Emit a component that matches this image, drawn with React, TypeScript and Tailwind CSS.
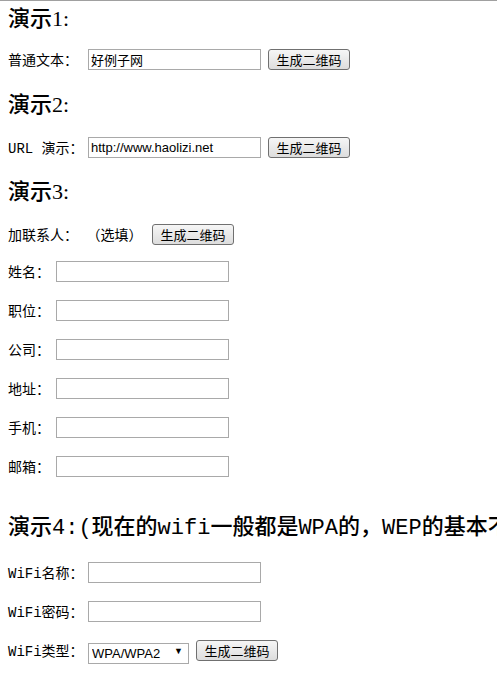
const cjk = "font-['Liberation_Mono','Noto_Sans_CJK_SC',monospace]";

function Btn() {
  return (
    <button className="h-[21px] w-[82px] rounded-[3px] border border-[#707070] bg-gradient-to-b from-[#f6f6f6] to-[#dddddd] text-[13px] leading-[19px] text-black font-['Noto_Sans_CJK_SC',sans-serif]">
      生成二维码
    </button>
  );
}

function Field({ value = "" }: { value?: string }) {
  return (
    <input
      readOnly
      value={value}
      className="h-[21px] w-[173px] border border-[#a9a9a9] bg-white px-[2px] text-[13px] text-black outline-none font-['Liberation_Sans','Noto_Sans_CJK_SC',sans-serif]"
    />
  );
}

function Row({ label, w, children, mt }: { label: string; w: string; children: React.ReactNode; mt: string }) {
  return (
    <div className={`flex h-[21px] items-center ${mt}`}>
      <span className={`${w} shrink-0 whitespace-nowrap pt-[4px] text-[14px] leading-[17px] ${cjk}`}>{label}</span>
      {children}
    </div>
  );
}

const head = "h-[26px] whitespace-nowrap text-[22px] font-medium leading-[26px]";
const serifHead = "font-['Liberation_Serif','Noto_Sans_CJK_SC',serif]";

export default function App() {
  const contacts = ["姓名：", "职位：", "公司：", "地址：", "手机：", "邮箱："];

  return (
    <div className="h-[675px] w-[497px] overflow-hidden border-t border-[#a0a0a0] bg-white px-2 text-black">
      {/* demo 1 */}
      <h3 className={`mt-[5px] ${head} ${serifHead}`}>演示1:</h3>
      <Row label="普通文本：" w="w-[80px]" mt="mt-[17px]">
        <Field value="好例子网" />
        <span className="w-[7px]" />
        <Btn />
      </Row>

      {/* demo 2 */}
      <h3 className={`mt-[22px] ${head} ${serifHead}`}>演示2:</h3>
      <Row label="URL 演示：" w="w-[80px]" mt="mt-[19px]">
        <Field value="http://www.haolizi.net" />
        <span className="w-[7px]" />
        <Btn />
      </Row>

      {/* demo 3 */}
      <h3 className={`mt-[21px] ${head} ${serifHead}`}>演示3:</h3>
      <Row label="加联系人： （选填）" w="w-[144px]" mt="mt-[19px]">
        <Btn />
      </Row>
      {contacts.map((c, i) => (
        <Row key={c} label={c} w="w-[48px]" mt={i === 0 ? "mt-[16px]" : "mt-[18px]"}>
          <Field />
        </Row>
      ))}

      {/* demo 4 */}
      <h3 className={`mt-[39px] ${head} ${cjk}`}>
        演示4:(现在的wifi一般都是WPA的，WEP的基本不用了)
      </h3>
      <Row label="WiFi名称：" w="w-[80px]" mt="mt-[20px]">
        <Field />
      </Row>
      <Row label="WiFi密码：" w="w-[80px]" mt="mt-[18px]">
        <Field />
      </Row>
      <Row label="WiFi类型：" w="w-[80px]" mt="mt-[18px]">
        <div className="relative h-[21px] w-[101px]">
          <select className="h-[21px] w-[101px] appearance-none border border-[#a9a9a9] bg-white pl-[3px] text-[13px] leading-[19px] text-black outline-none font-['Liberation_Sans',sans-serif]">
            <option>WPA/WPA2</option>
            <option>WEP</option>
            <option>无加密</option>
          </select>
          <span className="pointer-events-none absolute right-[6px] top-[4px] text-[9px] leading-[13px]">▼</span>
        </div>
        <span className="w-[7px]" />
        <Btn />
      </Row>
    </div>
  );
}
